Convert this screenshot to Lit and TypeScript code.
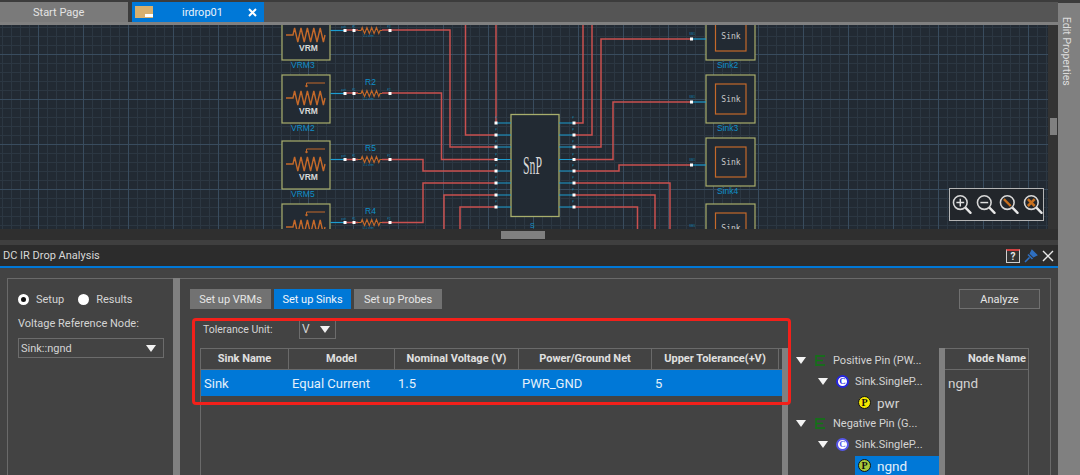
import { LitElement, html, css, svg } from "lit";
import { customElement } from "lit/decorators.js";

const RED = "#c9504f";
const CYAN = "#1b9ccf";
const BOX = "#a8ae6c";
const ORANGE = "#c4692a";
const LABEL = "#0f8fc8";

// wires, in page coordinates
const redWires = [
  "M345 30H358M382 30H450V147H496",
  "M345 93H358M382 93H441.5V159.5H496",
  "M345 159.5H358M382 159.5H423V171H496",
  "M345 222.5H358M382 222.5H423V183H496",
  "M465.5 20V135H496",
  "M496 20V123",
  "M444 235V195H496",
  "M460 235V207H496",
  "M574 123H583V20",
  "M574 135H592V20",
  "M574 147H601V39H691.5",
  "M574 159.5H613V102H691.5",
  "M574 171H619V165H691.5",
  "M574 183H670V235",
  "M574 195H655V235",
  "M574 207H637.5V235",
];
const pinRows = [123, 135, 147, 159.5, 171, 183, 195, 207];
const vrms = [
  { top: 12, name: "VRM3", res: "" },
  { top: 75, name: "VRM2", res: "R2" },
  { top: 141, name: "VRM5", res: "R5" },
  { top: 204, name: "", res: "R4" },
];
const sinks = [
  { top: 12, name: "Sink2" },
  { top: 75, name: "Sink3" },
  { top: 138, name: "Sink4" },
  { top: 204, name: "" },
];

function zigzag(x0: number, x1: number, y: number, amp: number, n: number) {
  const step = (x1 - x0) / (n * 2);
  let d = `M${x0} ${y}`;
  for (let i = 0; i < n * 2; i++) {
    const up = i % 2 === 0 ? -amp : amp;
    d += `L${x0 + step * (i + 0.5)} ${y + up}`;
  }
  return d + `L${x1} ${y}`;
}

function dot(x: number, y: number) {
  return svg`<rect x=${x - 1.5} y=${y - 1.5} width="3" height="3" fill="#fff"></rect>`;
}

function tiny(x: number, y: number, t: string) {
  return svg`<text x=${x} y=${y} font-size="3" fill=${LABEL} opacity="0.8">${t}</text>`;
}

function vrmBlock(v: { top: number; name: string; res: string }) {
  const t = v.top;
  const wy = t + 18.5;
  const zy = t + 23;
  return svg`
    <rect x="282" y=${t} width="48" height="48" fill="#222a33" stroke=${BOX} stroke-width="1.2"></rect>
    <path d="M286 ${zy}H293${zigzag(293, 325, zy, 7, 5).replace(/^M[^L]+/, "")}" fill="none" stroke=${ORANGE} stroke-width="1.4"></path>
    <path d="M306.5 ${t + 11}V${t + 8}H325" fill="none" stroke=${ORANGE} stroke-width="1"></path>
    <circle cx="306.5" cy=${t + 11} r="1.2" fill=${ORANGE}></circle>
    ${v.name
      ? svg`
        <text x="308.5" y=${t + 38.5} text-anchor="middle" font-size="8.5" font-weight="700" fill="#d8d8d8">VRM</text>
        <text x="291" y=${t + 56} font-size="8.5" fill=${LABEL}>${v.name}</text>`
      : ""}
    <path d="M330.5 ${wy}H345" stroke=${CYAN} stroke-width="1.2"></path>
    <path d="M358 ${wy}H361${zigzag(361, 380, wy, 3, 4).replace(/^M[^L]+/, "")}H382" fill="none" stroke=${ORANGE} stroke-width="1.1"></path>
    ${tiny(341, wy - 3, "port")}${tiny(352, wy - 3, "P1")}${tiny(387, wy - 3, "P2")}
    ${tiny(363, wy + 6, "0.1 ohm")}
    ${dot(345, wy)}${dot(354, wy)}${dot(390, wy)}
    ${v.res ? svg`<text x="365" y=${t + 10} font-size="8.5" fill=${LABEL}>${v.res}</text>` : ""}
  `;
}

function sinkBlock(s: { top: number; name: string }) {
  const t = s.top;
  return svg`
    <rect x="706" y=${t} width="49" height="48" fill="#222a33" stroke=${BOX} stroke-width="1.2"></rect>
    <rect x="715.5" y=${t + 9} width="30.5" height="30" fill="none" stroke=${ORANGE} stroke-width="1.2"></rect>
    <text x="731" y=${t + 27} text-anchor="middle" font-size="8" font-family="'DejaVu Sans Mono', monospace" fill="#c8c8c8">Sink</text>
    <path d="M691.5 ${t + 27}H706" stroke=${CYAN} stroke-width="1.2"></path>
    ${tiny(689, t + 23, "SM1")}
    ${dot(691.5, t + 27)}
    ${s.name ? svg`<text x="717" y=${t + 56} font-size="8.5" fill=${LABEL}>${s.name}</text>` : ""}
  `;
}

function magnifier(inner: unknown) {
  return html`<svg class="mag" width="22" height="24" viewBox="0 0 22 24">
    <path d="M15 15L20 20" stroke="#e8e8e8" stroke-width="2.4" stroke-linecap="round"></path>
    <circle cx="9.5" cy="9.5" r="7" fill="none" stroke="#d8d8d8" stroke-width="1.6"></circle>
    ${inner}
  </svg>`;
}

@customElement("app-root")
export class AppRoot extends LitElement {
  diagram() {
    return html`<svg class="diagram" width="1048" height="204" viewBox="0 25 1048 204">
      <defs>
        <pattern id="grid" x="38" y="9" width="45" height="45" patternUnits="userSpaceOnUse">
          <path d="M9.5 0V45M18.5 0V45M27.5 0V45M36.5 0V45M0 9.5H45M0 18.5H45M0 27.5H45M0 36.5H45" stroke="#2c3742" stroke-width="1" fill="none"></path>
          <path d="M0.5 0V45M0 0.5H45" stroke="#394c5e" stroke-width="1" fill="none"></path>
        </pattern>
      </defs>
      <rect x="0" y="25" width="1048" height="204" fill="#222a33"></rect>
      <rect x="0" y="25" width="1048" height="204" fill="url(#grid)"></rect>
      <g font-family="'Liberation Sans', sans-serif">
        ${redWires.map((d) => svg`<path d=${d} fill="none" stroke=${RED} stroke-width="1.5"></path>`)}
        ${vrms.map((v) => vrmBlock(v))}
        ${sinks.map((s) => sinkBlock(s))}
        <rect x="511" y="114.5" width="48" height="102" fill="#222a33" stroke=${BOX} stroke-width="1.3"></rect>
        ${pinRows.map(
          (y) => svg`
            <path d="M496 ${y}H511M559 ${y}H574" stroke=${CYAN} stroke-width="1.2"></path>
            ${dot(496, y)}${dot(574, y)}
            ${tiny(495, y - 4, "P")}${tiny(572, y - 4, "P")}
          `
        )}
        <text x="532.5" y="173.5" text-anchor="middle" font-size="25" font-family="'Liberation Serif', serif" fill="#d8d8d8" textLength="19" lengthAdjust="spacingAndGlyphs">SnP</text>
        <text x="530" y="228" font-size="7" fill=${LABEL}>S</text>
      </g>
    </svg>`;
  }

  render() {
    return html`
      <div class="app">
        <div class="main">
          <div class="topgap"></div>
          <div class="tabs">
            <div class="tab start">Start Page</div>
            <div class="tab active">
              <span class="tab-icon"><i></i></span>
              <span class="tab-name">irdrop01</span>
              <svg class="tab-x" width="9" height="9" viewBox="0 0 9 9"><path d="M1 1L8 8M8 1L1 8" stroke="#fff" stroke-width="2"></path></svg>
            </div>
          </div>
          <div class="canvas-row">
            <div class="canvas">
              ${this.diagram()}
              <div class="zoom-tools">
                ${magnifier(svg`<path d="M5.5 9.5H13.5M9.5 5.5V13.5" stroke="#e0e0e0" stroke-width="1.5"></path>`)}
                ${magnifier(svg`<path d="M5.5 9.5H13.5" stroke="#e0e0e0" stroke-width="1.5"></path>`)}
                ${magnifier(svg`<path d="M6 6L13 13" stroke="#c8701f" stroke-width="2.4"></path>`)}
                ${magnifier(svg`<path d="M6 6L13 13M13 6L6 13" stroke="#c8701f" stroke-width="2.6"></path>`)}
              </div>
            </div>
            <div class="vscroll"><div class="vthumb"></div></div>
          </div>
          <div class="hscroll"><div class="hthumb"></div></div>
          <div class="gap"></div>
          <div class="title">
            <span>DC IR Drop Analysis</span>
            <div class="title-icons">
              <span class="help">?</span>
              <svg width="14" height="14" viewBox="0 0 14 14">
                <path d="M1 13L5.5 8.5M4 5.5L8.5 10M8 1.5L12.5 6L9.5 7.5L6.5 4.5Z" stroke="#2f6fc0" stroke-width="1.6" fill="#2f6fc0"></path>
              </svg>
              <svg width="12" height="12" viewBox="0 0 12 12"><path d="M1 1L11 11M11 1L1 11" stroke="#e8e8e8" stroke-width="1.4"></path></svg>
            </div>
          </div>
          <div class="body">
            <div class="left">
              <div class="radios">
                <label class="radio on"><i></i>Setup</label>
                <label class="radio"><i></i>Results</label>
              </div>
              <div class="vr-label">Voltage Reference Node:</div>
              <div class="select wide"><span>Sink::ngnd</span><b class="caret"></b></div>
            </div>
            <div class="split"></div>
            <div class="right">
              <div class="toolbar">
                <div class="btns">
                  <button class="vrms">Set up VRMs</button>
                  <button class="sinks active">Set up Sinks</button>
                  <button class="probes">Set up Probes</button>
                </div>
                <button class="analyze">Analyze</button>
              </div>
              <div class="tol">
                <span class="tol-label">Tolerance Unit:</span>
                <div class="select unit"><span>V</span><b class="caret"></b></div>
              </div>
              <div class="grids">
                <div class="grid-main">
                  <div class="cols head">
                    <div>Sink Name</div><div>Model</div><div>Nominal Voltage (V)</div><div>Power/Ground Net</div><div>Upper Tolerance(+V)</div><div></div>
                  </div>
                  <div class="cols row">
                    <div>Sink</div><div>Equal Current</div><div>1.5</div><div>PWR_GND</div><div>5</div><div></div>
                  </div>
                </div>
                <div class="split thin"></div>
                <div class="tree">
                  ${this.treeRow0("Positive Pin (PW...")}
                  ${this.treeRow1("Sink.SingleP...")}
                  ${this.treeRow2("pwr", false)}
                  ${this.treeRow0("Negative Pin (G...")}
                  ${this.treeRow1("Sink.SingleP...", true)}
                  ${this.treeRow2("ngnd", true)}
                </div>
                <div class="split thin"></div>
                <div class="nodes">
                  <div class="nodes-head">Node Name</div>
                  <div class="nodes-cell">ngnd</div>
                </div>
              </div>
              <div class="callout"></div>
            </div>
          </div>
        </div>
        <div class="strip"><span>Edit Properties</span></div>
      </div>
    `;
  }

  treeRow0(label: string) {
    return html`<div class="tr d0">
      <b class="tri"></b>
      <svg class="net" width="11" height="11" viewBox="0 0 11 11"><path d="M1 0V11M1 1H10M1 5.5H8M1 10H10" stroke="#0d7a12" stroke-width="1.3" fill="none"></path></svg>
      <span class="small">${label}</span>
    </div>`;
  }

  treeRow1(label: string, pale = false) {
    return html`<div class="tr d1">
      <b class="tri"></b>
      <span class="badge c ${pale ? "pale" : ""}">C</span>
      <span class="small">${label}</span>
    </div>`;
  }

  treeRow2(label: string, selected: boolean) {
    return html`<div class="tr d2">
      <div class="leaf ${selected ? "sel" : ""}">
        <span class="badge p">P</span>
        <span class="big">${label}</span>
      </div>
    </div>`;
  }

  static styles = css`
    :host {
      display: block;
      width: 1080px;
      height: 475px;
      overflow: hidden;
      font-family: Roboto, "Noto Sans", sans-serif;
      color: #d4d4d4;
    }
    .app {
      display: grid;
      grid-template-columns: 1058px 22px;
      height: 475px;
      background: #3c3c3c;
    }
    .main {
      display: flex;
      flex-direction: column;
      min-width: 0;
    }
    .topgap {
      height: 2px;
      background: #3c3c3c;
    }
    .tabs {
      display: flex;
      height: 20px;
      background: #555;
      border-bottom: 3px solid #808080;
    }
    .tab {
      display: flex;
      align-items: center;
      font-size: 11px;
      height: 20px;
    }
    .start {
      width: 132px;
      background: #7a7a7a;
      padding-left: 33px;
      box-sizing: border-box;
      color: #e4e4e4;
      border-right: 4px solid #3c3c3c;
    }
    .active {
      width: 132px;
      background: #0078d7;
      color: #e8f2fb;
    }
    .tab-icon {
      width: 18px;
      height: 12px;
      margin-left: 3px;
      background: #d8b06e;
      display: flex;
      align-items: flex-end;
      justify-content: flex-end;
    }
    .tab-icon i {
      width: 8px;
      height: 3px;
      background: #fff;
      margin-bottom: 1px;
    }
    .tab-name {
      margin-left: 29px;
      width: 66px;
    }
    .canvas-row {
      display: flex;
      height: 204px;
    }
    .canvas {
      width: 1048px;
      position: relative;
      overflow: hidden;
    }
    .diagram {
      display: block;
    }
    .zoom-tools {
      position: absolute;
      left: 949px;
      top: 163px;
      width: 95px;
      height: 33px;
      box-sizing: border-box;
      border: 1.5px solid #b4b4b4;
      background: #22262b;
      display: flex;
      align-items: center;
      padding-left: 1px;
      gap: 2px;
    }
    .vscroll {
      width: 10px;
      background: #333;
      padding-top: 93px;
      box-sizing: border-box;
    }
    .vthumb {
      width: 7px;
      height: 17px;
      margin-left: 2px;
      background: #808080;
    }
    .hscroll {
      height: 11px;
      background: #2f2f2f;
      padding-top: 2px;
      box-sizing: border-box;
    }
    .hthumb {
      width: 44px;
      height: 8px;
      margin-left: 501px;
      background: #808080;
    }
    .gap {
      height: 5px;
      background: #3f3f3f;
    }
    .title {
      height: 21px;
      background: #2c2c2c;
      border-bottom: 2px solid #0078d7;
      display: flex;
      align-items: center;
      justify-content: space-between;
      padding: 0 4px 0 3px;
      font-size: 11px;
      color: #d8d8d8;
    }
    .title-icons {
      display: flex;
      align-items: center;
      gap: 4px;
    }
    .help {
      width: 14px;
      height: 14px;
      box-sizing: border-box;
      border: 1px solid #d0d0d0;
      border-top: 2px solid #d04040;
      background: #333;
      font-size: 10px;
      font-weight: 700;
      line-height: 11px;
      text-align: center;
      color: #e8e8e8;
    }
    .body {
      flex: 1;
      min-height: 0;
      display: flex;
      background: #434343;
      padding: 10px 7px 0 7px;
      overflow: hidden;
    }
    .left {
      width: 166px;
      box-sizing: border-box;
      border-top: 1px solid #6a6a6a;
      border-left: 1px solid #6a6a6a;
      padding: 12px 0 0 10px;
      font-size: 11px;
    }
    .radios {
      display: flex;
      align-items: center;
      height: 16px;
    }
    .radio {
      display: flex;
      align-items: center;
      gap: 7px;
      margin-right: 14px;
    }
    .radio i {
      width: 11px;
      height: 11px;
      border-radius: 50%;
      background: #fff;
      box-sizing: border-box;
    }
    .radio.on i {
      border: 3px solid #fff;
      background: #111;
    }
    .vr-label {
      margin-top: 9px;
      line-height: 16px;
    }
    .select {
      display: flex;
      align-items: center;
      justify-content: space-between;
      box-sizing: border-box;
      border: 1px solid #6c6c6c;
    }
    .select.wide {
      width: 146px;
      height: 20px;
      margin-top: 6px;
      padding: 0 7px 0 2px;
    }
    .caret {
      width: 0;
      height: 0;
      border-left: 5px solid transparent;
      border-right: 5px solid transparent;
      border-top: 7px solid #f2f2f2;
    }
    .split {
      width: 7px;
      background: #808080;
      flex: none;
    }
    .split.thin {
      width: 6px;
    }
    .right {
      position: relative;
      flex: 1;
      min-width: 0;
      box-sizing: border-box;
      border-top: 1px solid #6a6a6a;
      border-right: 1px solid #6a6a6a;
      padding: 10px 0 0 10px;
      display: flex;
      flex-direction: column;
    }
    .toolbar {
      display: flex;
      justify-content: space-between;
      padding-right: 10px;
    }
    .btns {
      display: flex;
      gap: 3px;
    }
    button {
      height: 20px;
      padding: 0;
      border: none;
      background: #727272;
      color: #e6e6e6;
      font: inherit;
      font-size: 11px;
    }
    .vrms {
      width: 81px;
    }
    .sinks {
      width: 77px;
    }
    .probes {
      width: 88px;
    }
    button.active {
      background: #0078d7;
      color: #f0f6fc;
    }
    .analyze {
      width: 81px;
      background: #4a4a4a;
      border: 1px solid #707070;
      box-sizing: border-box;
    }
    .tol {
      display: flex;
      align-items: center;
      margin-top: 11px;
      height: 19px;
      padding-left: 13px;
      font-size: 10.5px;
    }
    .tol-label {
      width: 96px;
    }
    .select.unit {
      width: 37px;
      height: 19px;
      padding: 0 5px 0 2px;
      font-size: 12px;
      border-top: none;
    }
    .grids {
      display: flex;
      flex: 1;
      min-height: 0;
      margin-top: 9px;
      margin-left: 10px;
    }
    .grid-main {
      width: 582px;
      flex: none;
      border-left: 1px solid #6a6a6a;
      box-sizing: border-box;
    }
    .cols {
      display: grid;
      grid-template-columns: 88px 106px 124px 133px 127px 1fr;
      align-items: center;
    }
    .head {
      height: 22px;
      box-sizing: border-box;
      border-top: 1px solid #6a6a6a;
      border-bottom: 1px solid #6a6a6a;
      font-size: 11px;
      font-weight: 700;
      color: #e0e0e0;
      text-align: center;
    }
    .head > div {
      height: 21px;
      line-height: 20px;
      border-right: 1px solid #6a6a6a;
      box-sizing: border-box;
      white-space: nowrap;
    }
    .head > div:last-child {
      border-right: none;
    }
    .row {
      height: 26px;
      background: #0078d7;
      color: #e4f0fa;
      font-size: 13px;
    }
    .row > div {
      padding-left: 3px;
      white-space: nowrap;
    }
    .tree {
      width: 151px;
      flex: none;
      padding-top: 2px;
      box-sizing: border-box;
    }
    .tr {
      display: flex;
      align-items: center;
      height: 21px;
    }
    .d0 {
      padding-left: 8px;
    }
    .d1 {
      padding-left: 30px;
    }
    .d2 {
      padding-left: 67px;
    }
    .tri {
      width: 0;
      height: 0;
      border-left: 5px solid transparent;
      border-right: 5px solid transparent;
      border-top: 7px solid #f4f4f4;
      margin-right: 9px;
    }
    .d1 .tri {
      margin-right: 8px;
    }
    .net {
      margin-right: 7px;
    }
    .badge {
      width: 13px;
      height: 13px;
      border-radius: 50%;
      box-sizing: border-box;
      font-family: "Liberation Serif", serif;
      font-weight: 700;
      font-size: 10px;
      line-height: 11px;
      text-align: center;
      flex: none;
    }
    .badge.c {
      background: #fff;
      color: #2626e0;
      border: 2px solid #2626e0;
      line-height: 9px;
      margin-right: 6px;
      font-size: 9px;
    }
    .badge.c.pale {
      border-color: #5656e8;
      color: #5656e8;
    }
    .badge.p {
      background: #f5e800;
      color: #111;
      border: 1px solid #111;
      margin-right: 6px;
    }
    .sel .badge.p {
      background: #a6c93a;
    }
    .small {
      font-size: 11px;
      white-space: nowrap;
    }
    .big {
      font-size: 13.5px;
    }
    .leaf {
      display: flex;
      align-items: center;
      width: 84px;
      height: 20px;
      padding-left: 3px;
      box-sizing: border-box;
    }
    .leaf.sel {
      background: #0078d7;
      color: #e4f0fa;
    }
    .nodes {
      width: 84px;
      flex: none;
      box-sizing: border-box;
      border-right: 1px solid #6a6a6a;
    }
    .nodes-head {
      height: 22px;
      box-sizing: border-box;
      border-top: 1px solid #6a6a6a;
      border-bottom: 1px solid #6a6a6a;
      font-size: 11px;
      font-weight: 700;
      line-height: 20px;
      text-align: right;
      padding-right: 2px;
      color: #e0e0e0;
    }
    .nodes-cell {
      height: 26px;
      line-height: 26px;
      padding-left: 3px;
      font-size: 13.5px;
    }
    .callout {
      position: absolute;
      left: 12px;
      top: 39px;
      width: 599px;
      height: 87px;
      box-sizing: border-box;
      border: 3px solid #f3201a;
      border-radius: 4px;
      pointer-events: none;
    }
    .strip {
      margin-top: 3px;
      background: #808080;
      padding: 14px 0 0 2px;
      font-size: 10.5px;
      color: #dcdcdc;
    }
    .strip span {
      writing-mode: vertical-rl;
    }
  `;
}
